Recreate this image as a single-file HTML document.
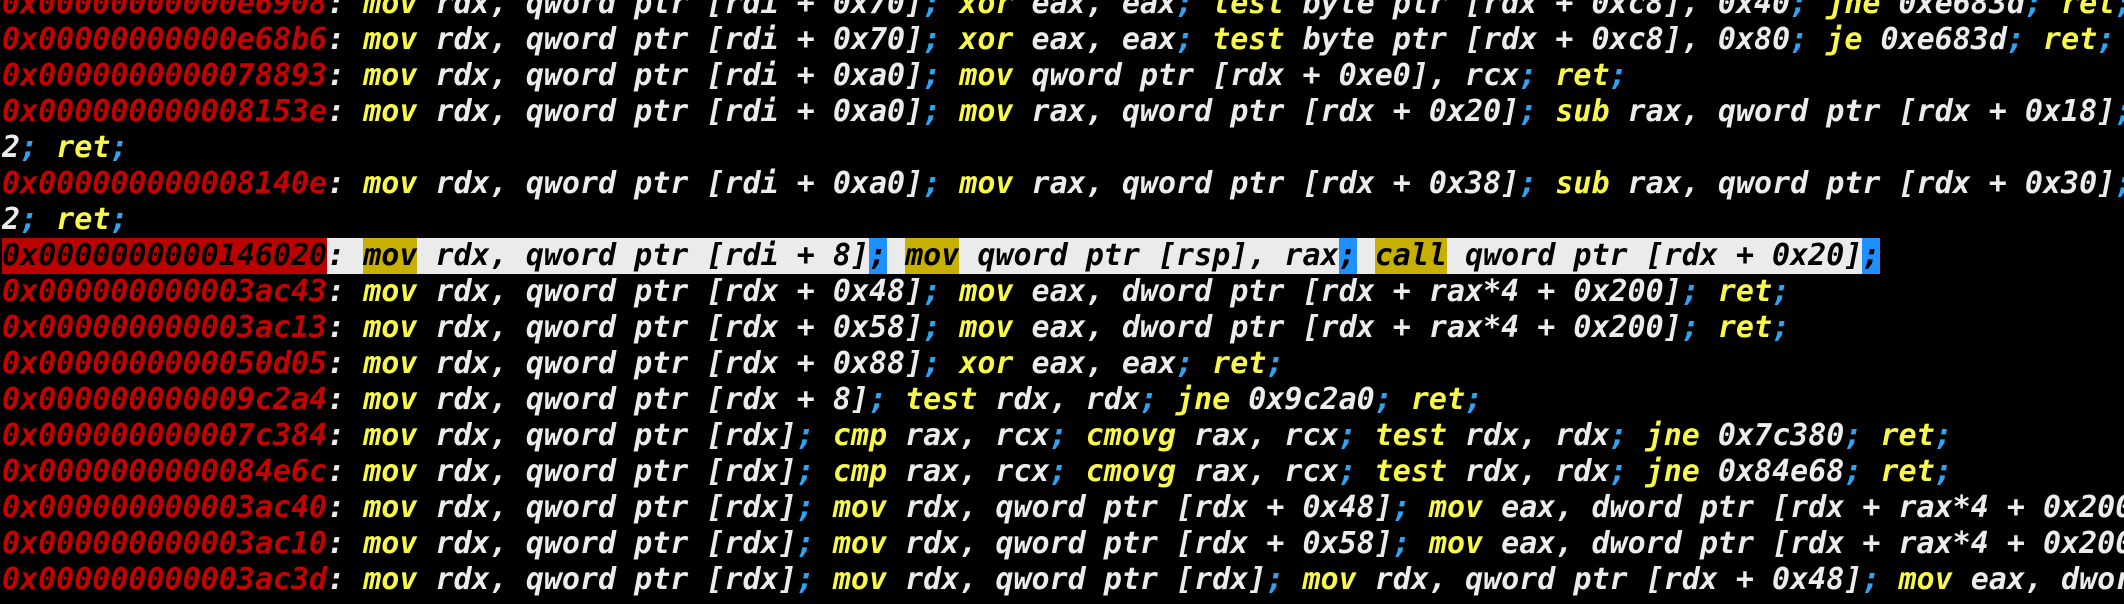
<!DOCTYPE html>
<html><head><meta charset="utf-8"><style>
html,body{margin:0;padding:0;background:#000;width:2124px;height:604px;overflow:hidden}
#t{position:absolute;left:2px;top:-14px;font-family:"DejaVu Sans Mono","Liberation Mono",monospace;font-weight:bold;font-style:italic;font-size:30px;line-height:36px;color:#ececec}
.r{height:36px;overflow:hidden;width:2200px;white-space:pre}
.a{color:#c40000}.m{color:#f8f84a}.s{color:#2ea3f2}
.h{background:#ebebeb;color:#000;display:inline-block;vertical-align:top;height:36px}
.h span{display:inline-block;height:36px;vertical-align:top}
.h .a{background:#bb0000;color:#000}.h .m{background:#c8b000;color:#000}.h .s{background:#1e90ff;color:#000}
</style></head><body><div id="t"><div class="r"><span class="a">0x00000000000e6908</span>: <span class="m">mov</span> rdx, qword ptr [rdi + 0x70]<span class="s">;</span> <span class="m">xor</span> eax, eax<span class="s">;</span> <span class="m">test</span> byte ptr [rdx + 0xc8], 0x40<span class="s">;</span> <span class="m">jne</span> 0xe683d<span class="s">;</span> <span class="m">ret</span><span class="s">;</span></div><div class="r"><span class="a">0x00000000000e68b6</span>: <span class="m">mov</span> rdx, qword ptr [rdi + 0x70]<span class="s">;</span> <span class="m">xor</span> eax, eax<span class="s">;</span> <span class="m">test</span> byte ptr [rdx + 0xc8], 0x80<span class="s">;</span> <span class="m">je</span> 0xe683d<span class="s">;</span> <span class="m">ret</span><span class="s">;</span></div><div class="r"><span class="a">0x0000000000078893</span>: <span class="m">mov</span> rdx, qword ptr [rdi + 0xa0]<span class="s">;</span> <span class="m">mov</span> qword ptr [rdx + 0xe0], rcx<span class="s">;</span> <span class="m">ret</span><span class="s">;</span></div><div class="r"><span class="a">0x000000000008153e</span>: <span class="m">mov</span> rdx, qword ptr [rdi + 0xa0]<span class="s">;</span> <span class="m">mov</span> rax, qword ptr [rdx + 0x20]<span class="s">;</span> <span class="m">sub</span> rax, qword ptr [rdx + 0x18]<span class="s">;</span></div><div class="r">2<span class="s">;</span> <span class="m">ret</span><span class="s">;</span></div><div class="r"><span class="a">0x000000000008140e</span>: <span class="m">mov</span> rdx, qword ptr [rdi + 0xa0]<span class="s">;</span> <span class="m">mov</span> rax, qword ptr [rdx + 0x38]<span class="s">;</span> <span class="m">sub</span> rax, qword ptr [rdx + 0x30]<span class="s">;</span></div><div class="r">2<span class="s">;</span> <span class="m">ret</span><span class="s">;</span></div><div class="r"><span class="h"><span class="a">0x0000000000146020</span>: <span class="m">mov</span> rdx, qword ptr [rdi + 8]<span class="s">;</span> <span class="m">mov</span> qword ptr [rsp], rax<span class="s">;</span> <span class="m">call</span> qword ptr [rdx + 0x20]<span class="s">;</span></span></div><div class="r"><span class="a">0x000000000003ac43</span>: <span class="m">mov</span> rdx, qword ptr [rdx + 0x48]<span class="s">;</span> <span class="m">mov</span> eax, dword ptr [rdx + rax*4 + 0x200]<span class="s">;</span> <span class="m">ret</span><span class="s">;</span></div><div class="r"><span class="a">0x000000000003ac13</span>: <span class="m">mov</span> rdx, qword ptr [rdx + 0x58]<span class="s">;</span> <span class="m">mov</span> eax, dword ptr [rdx + rax*4 + 0x200]<span class="s">;</span> <span class="m">ret</span><span class="s">;</span></div><div class="r"><span class="a">0x0000000000050d05</span>: <span class="m">mov</span> rdx, qword ptr [rdx + 0x88]<span class="s">;</span> <span class="m">xor</span> eax, eax<span class="s">;</span> <span class="m">ret</span><span class="s">;</span></div><div class="r"><span class="a">0x000000000009c2a4</span>: <span class="m">mov</span> rdx, qword ptr [rdx + 8]<span class="s">;</span> <span class="m">test</span> rdx, rdx<span class="s">;</span> <span class="m">jne</span> 0x9c2a0<span class="s">;</span> <span class="m">ret</span><span class="s">;</span></div><div class="r"><span class="a">0x000000000007c384</span>: <span class="m">mov</span> rdx, qword ptr [rdx]<span class="s">;</span> <span class="m">cmp</span> rax, rcx<span class="s">;</span> <span class="m">cmovg</span> rax, rcx<span class="s">;</span> <span class="m">test</span> rdx, rdx<span class="s">;</span> <span class="m">jne</span> 0x7c380<span class="s">;</span> <span class="m">ret</span><span class="s">;</span></div><div class="r"><span class="a">0x0000000000084e6c</span>: <span class="m">mov</span> rdx, qword ptr [rdx]<span class="s">;</span> <span class="m">cmp</span> rax, rcx<span class="s">;</span> <span class="m">cmovg</span> rax, rcx<span class="s">;</span> <span class="m">test</span> rdx, rdx<span class="s">;</span> <span class="m">jne</span> 0x84e68<span class="s">;</span> <span class="m">ret</span><span class="s">;</span></div><div class="r"><span class="a">0x000000000003ac40</span>: <span class="m">mov</span> rdx, qword ptr [rdx]<span class="s">;</span> <span class="m">mov</span> rdx, qword ptr [rdx + 0x48]<span class="s">;</span> <span class="m">mov</span> eax, dword ptr [rdx + rax*4 + 0x200]<span class="s">;</span> <span class="m">ret</span><span class="s">;</span></div><div class="r"><span class="a">0x000000000003ac10</span>: <span class="m">mov</span> rdx, qword ptr [rdx]<span class="s">;</span> <span class="m">mov</span> rdx, qword ptr [rdx + 0x58]<span class="s">;</span> <span class="m">mov</span> eax, dword ptr [rdx + rax*4 + 0x200]<span class="s">;</span> <span class="m">ret</span><span class="s">;</span></div><div class="r"><span class="a">0x000000000003ac3d</span>: <span class="m">mov</span> rdx, qword ptr [rdx]<span class="s">;</span> <span class="m">mov</span> rdx, qword ptr [rdx]<span class="s">;</span> <span class="m">mov</span> rdx, qword ptr [rdx + 0x48]<span class="s">;</span> <span class="m">mov</span> eax, dword ptr [rdx + rax*4 + 0x200]<span class="s">;</span> <span class="m">ret</span><span class="s">;</span></div></div></body></html>
